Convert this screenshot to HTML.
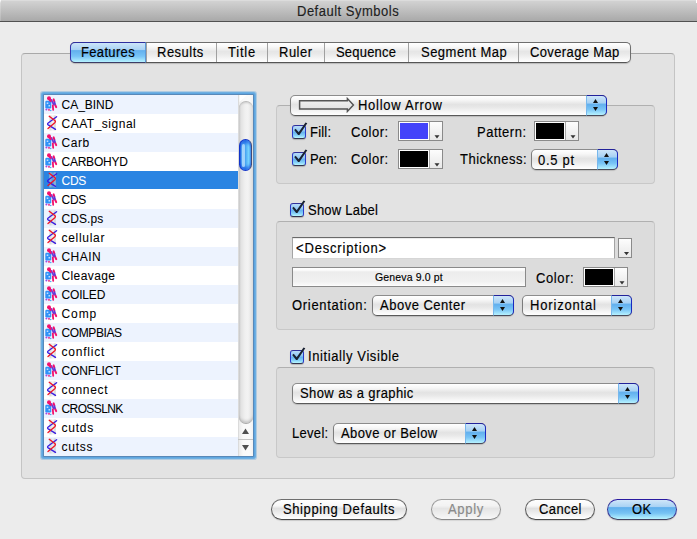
<!DOCTYPE html>
<html><head><meta charset="utf-8">
<style>
html,body{margin:0;padding:0;}
body{width:697px;height:539px;overflow:hidden;position:relative;background:#ececec;font-family:"Liberation Sans",sans-serif;}
div,span{box-sizing:border-box;}
.a{position:absolute;}
.t{position:absolute;white-space:nowrap;font-size:13px;line-height:13px;letter-spacing:.5px;color:#000;-webkit-text-stroke:.15px currentColor;transform:scaleY(1.08);transform-origin:0 0;}
.titlebar{left:0;top:0;width:697px;height:22px;background:linear-gradient(#e6e6e6 0px,#d2d2d2 1px,#a9a9a9 21px);border-bottom:1px solid #515151;}
.gbox{border:1px solid #c4c4c4;border-top-color:#a9a9a9;border-radius:4px;background:#e3e3e3;}
.ibox{border:1px solid #c8c8c8;border-top-color:#b0b0b0;border-radius:4px;background:#dcdcdc;}
/* segmented tabs */
.tabs{left:70px;top:42px;width:561px;height:21px;border:1px solid #6e6e6e;border-bottom-color:#555;border-radius:5px;background:linear-gradient(#fff 0%,#f8f8f8 20%,#e6e6e6 45%,#e9e9e9 58%,#f7f7f7 85%,#fff 100%);box-shadow:0 1px 1px rgba(0,0,0,.18);overflow:hidden;}
.seg{position:absolute;top:0;height:19px;border-left:1px solid #a0a0a0;}
.blue{background:linear-gradient(#cde5f9 0%,#a9d2f4 35%,#62b0ee 40%,#78c4f6 70%,#b6f2ff 100%);}
.pop{position:absolute;height:21px;border:1px solid #7c7c7c;border-top-color:#8c8c8c;border-bottom-color:#595959;border-radius:5px;background:linear-gradient(#fff 0%,#f7f7f7 20%,#e3e3e3 45%,#e7e7e7 58%,#f7f7f7 85%,#fff 100%);box-shadow:0 1px 1px rgba(0,0,0,.15);}
.pb{position:absolute;top:-1px;right:-1px;bottom:-1px;width:21px;border:1px solid #22229a;border-right-color:#1a2ac0;border-left:1px solid #78b8ec;border-bottom-color:#4a4a5a;border-radius:0 5px 5px 0;background:linear-gradient(#cde5f9 0%,#a9d2f4 35%,#62b0ee 45%,#78c4f6 70%,#b6f2ff 100%);}
.btn{position:absolute;height:21px;border:1px solid #5e5e5e;border-top-color:#6e6e6e;border-bottom-color:#464646;border-radius:11px;background:linear-gradient(#fff 0%,#f8f8f8 30%,#e0e0e0 45%,#ececec 65%,#fff 100%);box-shadow:0 1px 1px rgba(0,0,0,.15);}
.btn.def{border-color:#2a1aa0 #3a3a9a #404060;background:linear-gradient(#cfe6f9 0%,#a8d2f4 36%,#5eaeec 40%,#78c4f4 70%,#b8f4ff 100%);}
.cb{position:absolute;width:14px;height:14px;border:1px solid #2a3ac8;border-top-color:#30309a;border-bottom-color:#33334e;border-radius:3px;background:linear-gradient(#b8dcf8 0%,#92c8f4 40%,#66b2ee 52%,#86d0f8 78%,#b8f8ff 100%);box-shadow:0 1px 1px rgba(0,0,0,.2);}
.well{position:absolute;height:20px;border:1px solid #8a8a8a;background:linear-gradient(#fdfdfd,#e8e8e8);}
.tf{position:absolute;border:1px solid #a4a4a4;border-top-color:#6a6a6a;border-bottom-color:#d6d6d6;background:#fff;box-shadow:inset 0 1px 0 rgba(0,0,0,.08);}
.ic{position:absolute;left:0;top:0;}
.thumb{position:absolute;left:195px;top:44px;width:13px;height:32px;border-radius:6.5px;border:1px solid #1234c8;border-right-color:#404a7a;background:linear-gradient(90deg,#1a58dc 0%,#58aaf2 15%,#4aa6f2 50%,#78d6ff 80%,#4a9aec 100%);box-shadow:inset 0 4px 3px -1px rgba(10,60,220,.55),inset 0 -4px 3px -1px rgba(10,60,220,.55);}
.arr{position:absolute;left:-1px;top:-1px;}
.row{position:absolute;left:0;width:194px;height:19px;}
.row .t{font-size:12px;line-height:12px;left:17.5px;top:4px;-webkit-text-stroke:.05px currentColor;transform:none;}
</style></head><body>
<svg width="0" height="0" style="position:absolute;left:0;top:0">
<defs>
<g id="hel">
 <rect x="5" y="1.5" width="7" height="15" fill="#d0d0d0" opacity=".3"/><rect x="5.5" y="1.3" width="2" height="15" fill="#c8c8c8" opacity=".45"/><rect x="9.8" y="1.3" width="2" height="15" fill="#c8c8c8" opacity=".45"/>
 <path d="M12.6 2.7 L4.2 9 Q3 10 4.2 10.9 L11.5 15.3" stroke="#3a1ee0" stroke-width="1.35" fill="none" stroke-linecap="round"/>
 <path d="M5.2 2.3 L10.8 6.5 Q12 7.6 10.8 8.7 L4 14.6" stroke="#f01424" stroke-width="1.35" fill="none" stroke-linecap="round"/>
</g>
<g id="mol">
 <rect x="1.3" y="5.8" width="6" height="7.6" rx="1.2" fill="#3092f8"/>
 <rect x="2.7" y="7.5" width="1.6" height="1.4" fill="#cfe6ff"/>
 <rect x="4.5" y="10.1" width="1.6" height="1.4" fill="#cfe6ff"/>
 <path d="M7.4 5 L9.8 9.6" stroke="#6a3ad8" stroke-width="1.8" stroke-linecap="round"/>
 <circle cx="5" cy="3.3" r="2" fill="#f2126e"/><path d="M5.2 4 L6.6 5.8" stroke="#f2126e" stroke-width="2.2" stroke-linecap="round"/>
 <path d="M9.6 4.4 L10.3 6.4 M11.2 9.8 L12.2 12.2" stroke="#f2126e" stroke-width="2" stroke-linecap="round"/>
 <path d="M10.3 6.6 L11.2 9.8" stroke="#5a38d8" stroke-width="1.7"/>
 <path d="M8.8 10.4 L9.2 14.8" stroke="#f2126e" stroke-width="1.8" stroke-linecap="round"/>
 <circle cx="2.4" cy="14.5" r="1" fill="#a048e8"/>
 <circle cx="5" cy="14.8" r="1.1" fill="#f04a90"/>
 <circle cx="6.7" cy="15.5" r=".8" fill="#50a8f4"/>
</g>
</defs></svg>
<div class="a titlebar"></div>
<div class="a" style="left:0;top:0;width:1px;height:21px;background:linear-gradient(#fff,#d8d8d8 3px,#b8b8b8);"></div><div class="a" style="left:696px;top:0;width:1px;height:3px;background:#fff;"></div>
<div class="t" style="left:297px;top:4px;color:#1e1e1e">Default Symbols</div>

<!-- main group box -->
<div class="a gbox" style="left:21px;top:53px;width:654px;height:426px;"></div>

<!-- tabs -->
<div class="a tabs">
  
  <div class="seg" style="left:75px;width:70px;"></div>
  <div class="seg" style="left:145px;width:51px;"></div>
  <div class="seg" style="left:196px;width:57px;"></div>
  <div class="seg" style="left:253px;width:84px;"></div>
  <div class="seg" style="left:337px;width:110px;"></div>
  <div class="seg" style="left:447px;width:113px;"></div>
</div>
<div class="a blue" style="left:70px;top:42px;width:76px;height:21px;border:1px solid #2e2e9e;border-left-color:#3434b0;border-right:1px solid #5a98d8;border-bottom-color:#3d3d66;border-radius:5px 0 0 5px;"></div>
<div class="t" style="left:81px;top:45px;letter-spacing:.34px">Features</div>
<div class="t" style="left:157px;top:45px;letter-spacing:.5px">Results</div>
<div class="t" style="left:228px;top:45px;letter-spacing:.8px">Title</div>
<div class="t" style="left:279px;top:45px;letter-spacing:.5px">Ruler</div>
<div class="t" style="left:336px;top:45px;letter-spacing:.2px">Sequence</div>
<div class="t" style="left:421px;top:45px;letter-spacing:.48px">Segment Map</div>
<div class="t" style="left:530px;top:45px;letter-spacing:.37px">Coverage Map</div>

<!-- list box -->
<div id="list" class="a" style="left:41px;top:92px;width:215px;height:367px;">
  <div class="a" style="left:2px;top:2px;width:211px;height:363px;background:#5888b8;border-radius:1px;box-shadow:0 0 0 1px #5ea6e0,0 0 0 2px rgba(94,166,224,.78),0 0 0 3px rgba(94,166,224,.38);"></div>
  <div class="a" style="left:3px;top:3px;width:209px;height:361px;background:#fff;overflow:hidden;">
    <div id="rows" class="a" style="left:0;top:0;width:194px;height:361px;">
<div class="row" style="top:0px;background:#edf3fe"><svg class="ic" width="16" height="19" viewBox="0 0 16 19"><use href="#mol"/></svg><div class="t" style="color:#000;letter-spacing:-0.02px">CA_BIND</div></div>
<div class="row" style="top:19px;background:#fff"><svg class="ic" width="16" height="19" viewBox="0 0 16 19"><use href="#hel"/></svg><div class="t" style="color:#000;letter-spacing:0.51px">CAAT_signal</div></div>
<div class="row" style="top:38px;background:#edf3fe"><svg class="ic" width="16" height="19" viewBox="0 0 16 19"><use href="#mol"/></svg><div class="t" style="color:#000;letter-spacing:0.53px">Carb</div></div>
<div class="row" style="top:57px;background:#fff"><svg class="ic" width="16" height="19" viewBox="0 0 16 19"><use href="#mol"/></svg><div class="t" style="color:#000;letter-spacing:-0.24px">CARBOHYD</div></div>
<div class="row" style="top:76px;height:18px;background:#2a84e2"><svg class="ic" width="16" height="19" viewBox="0 0 16 19"><use href="#hel"/></svg><div class="t" style="color:#fff;letter-spacing:-0.25px">CDS</div></div>
<div class="row" style="top:95px;background:#fff"><svg class="ic" width="16" height="19" viewBox="0 0 16 19"><use href="#mol"/></svg><div class="t" style="color:#000;letter-spacing:-0.25px">CDS</div></div>
<div class="row" style="top:114px;background:#edf3fe"><svg class="ic" width="16" height="19" viewBox="0 0 16 19"><use href="#hel"/></svg><div class="t" style="color:#000;letter-spacing:0.08px">CDS.ps</div></div>
<div class="row" style="top:133px;background:#fff"><svg class="ic" width="16" height="19" viewBox="0 0 16 19"><use href="#hel"/></svg><div class="t" style="color:#000;letter-spacing:0.71px">cellular</div></div>
<div class="row" style="top:152px;background:#edf3fe"><svg class="ic" width="16" height="19" viewBox="0 0 16 19"><use href="#mol"/></svg><div class="t" style="color:#000;letter-spacing:0.45px">CHAIN</div></div>
<div class="row" style="top:171px;background:#fff"><svg class="ic" width="16" height="19" viewBox="0 0 16 19"><use href="#mol"/></svg><div class="t" style="color:#000;letter-spacing:0.39px">Cleavage</div></div>
<div class="row" style="top:190px;background:#edf3fe"><svg class="ic" width="16" height="19" viewBox="0 0 16 19"><use href="#mol"/></svg><div class="t" style="color:#000;letter-spacing:-0.16px">COILED</div></div>
<div class="row" style="top:209px;background:#fff"><svg class="ic" width="16" height="19" viewBox="0 0 16 19"><use href="#mol"/></svg><div class="t" style="color:#000;letter-spacing:0.9px">Comp</div></div>
<div class="row" style="top:228px;background:#edf3fe"><svg class="ic" width="16" height="19" viewBox="0 0 16 19"><use href="#mol"/></svg><div class="t" style="color:#000;letter-spacing:-0.39px">COMPBIAS</div></div>
<div class="row" style="top:247px;background:#fff"><svg class="ic" width="16" height="19" viewBox="0 0 16 19"><use href="#hel"/></svg><div class="t" style="color:#000;letter-spacing:0.77px">conflict</div></div>
<div class="row" style="top:266px;background:#edf3fe"><svg class="ic" width="16" height="19" viewBox="0 0 16 19"><use href="#mol"/></svg><div class="t" style="color:#000;letter-spacing:-0.11px">CONFLICT</div></div>
<div class="row" style="top:285px;background:#fff"><svg class="ic" width="16" height="19" viewBox="0 0 16 19"><use href="#hel"/></svg><div class="t" style="color:#000;letter-spacing:0.67px">connect</div></div>
<div class="row" style="top:304px;background:#edf3fe"><svg class="ic" width="16" height="19" viewBox="0 0 16 19"><use href="#mol"/></svg><div class="t" style="color:#000;letter-spacing:-0.6px">CROSSLNK</div></div>
<div class="row" style="top:323px;background:#fff"><svg class="ic" width="16" height="19" viewBox="0 0 16 19"><use href="#hel"/></svg><div class="t" style="color:#000;letter-spacing:0.75px">cutds</div></div>
<div class="row" style="top:342px;background:#edf3fe"><svg class="ic" width="16" height="19" viewBox="0 0 16 19"><use href="#hel"/></svg><div class="t" style="color:#000;letter-spacing:0.75px">cutss</div></div>
</div>
    <!-- scrollbar -->
    <div class="a" style="left:194px;top:0;width:15px;height:361px;background:linear-gradient(90deg,#d2d2d2 0px,#ededed 1.5px,#f9f9f9 5px,#fbfbfb 11px,#f2f2f2 15px);"></div>
    <svg class="a" style="left:194px;top:0" width="15" height="8"><polygon points="1.5,0 9,0 1.5,7" fill="#ffffff"/></svg>
    <div class="a" style="left:194.5px;top:6px;width:14px;height:323px;border-radius:7px;border-top:1px solid #b8b8b8;border-bottom:1px solid #a8a8a8;background:linear-gradient(90deg,#c8c8c8 0px,#e2e2e2 2px,#f0f0f0 6px,#f3f3f3 9px,#e6e6e6 12px,#dadada 14px);box-shadow:inset 0 3px 2px -2px rgba(0,0,0,.15),inset 0 -4px 3px -2px rgba(0,0,0,.18);"></div>
    <div class="thumb"><div class="a" style="left:1.5px;top:4px;width:3.5px;height:23px;border-radius:1.5px;background:rgba(196,230,255,.7);"></div></div>
    <div class="a" style="left:194px;top:344px;width:15px;height:1px;background:#c4c4c4;"></div>
    <svg class="a" style="left:194px;top:328px" width="15" height="33"><polygon points="4,11 11,11 7.5,5.4" fill="#505050"/><polygon points="4,22 11,22 7.5,27.5" fill="#505050"/></svg>
  </div>
</div>

<!-- right side -->
<div class="a ibox" style="left:276px;top:105px;width:379px;height:79px;"></div>
<div class="pop" style="left:290px;top:95px;width:317px;"><div class="pb"><svg class="arr" width="21" height="21"><polygon points="7,8 12,8 9.5,4" fill="#111"/><polygon points="7,12 12,12 9.5,16" fill="#111"/></svg></div></div>
<svg class="a" style="left:0;top:0" width="697" height="130"><defs><linearGradient id="ag" x1="0" y1="0" x2="0" y2="1"><stop offset="0" stop-color="#f4f4f4"/><stop offset="1" stop-color="#dedede"/></linearGradient></defs><path d="M299.6 100.7 H347.4 V98.6 L353.4 105 L347.4 111.4 V109 H299.6 Z" fill="url(#ag)" stroke="#555" stroke-width="1.5"/></svg>
<div class="t" style="left:358px;top:98px;letter-spacing:.73px">Hollow Arrow</div>

<div class="cb" style="left:292px;top:125px;"><svg class="a" style="left:-1px;top:-4px;overflow:visible" width="18" height="18"><polygon points="2.2,7.9 3.7,6.7 6.7,10.2 13.5,0.5 15.3,1.3 7.4,13.1 6.1,13.1" fill="#1a2232"/></svg></div>
<div class="t" style="left:310px;top:125px;letter-spacing:.2px">Fill:</div>
<div class="t" style="left:351px;top:125px;">Color:</div>
<div class="well" style="left:398px;top:121px;width:45px;"><div class="a" style="left:0;top:0;width:30px;height:18px;background:#fff;"></div><div class="a" style="left:1px;top:1px;width:28px;height:16px;background:#4343fa;"></div><div class="a" style="left:30px;top:0;width:1px;height:18px;background:#a8a8a8;"></div><svg class="a" style="left:31px;top:0" width="12" height="18"><polygon points="4.5,13.2 9.5,13.2 7,16.4" fill="#333"/></svg></div>
<div class="t" style="left:477px;top:125px;">Pattern:</div>
<div class="well" style="left:534px;top:121px;width:45px;"><div class="a" style="left:0;top:0;width:30px;height:18px;background:#fff;"></div><div class="a" style="left:1px;top:1px;width:28px;height:16px;background:#000;"></div><div class="a" style="left:30px;top:0;width:1px;height:18px;background:#a8a8a8;"></div><svg class="a" style="left:31px;top:0" width="12" height="18"><polygon points="4.5,13.2 9.5,13.2 7,16.4" fill="#333"/></svg></div>
<div class="cb" style="left:292px;top:152px;"><svg class="a" style="left:-1px;top:-4px;overflow:visible" width="18" height="18"><polygon points="2.2,7.9 3.7,6.7 6.7,10.2 13.5,0.5 15.3,1.3 7.4,13.1 6.1,13.1" fill="#1a2232"/></svg></div>
<div class="t" style="left:310px;top:152px;letter-spacing:.13px">Pen:</div>
<div class="t" style="left:351px;top:152px;">Color:</div>
<div class="well" style="left:398px;top:149px;width:45px;"><div class="a" style="left:0;top:0;width:30px;height:18px;background:#fff;"></div><div class="a" style="left:1px;top:1px;width:28px;height:16px;background:#000;"></div><div class="a" style="left:30px;top:0;width:1px;height:18px;background:#a8a8a8;"></div><svg class="a" style="left:31px;top:0" width="12" height="18"><polygon points="4.5,13.2 9.5,13.2 7,16.4" fill="#333"/></svg></div>
<div class="t" style="left:460px;top:152px;">Thickness:</div>
<div class="pop" style="left:531px;top:149px;width:87px;"><div class="pb"><svg class="arr" width="21" height="21"><polygon points="7,8 12,8 9.5,4" fill="#111"/><polygon points="7,12 12,12 9.5,16" fill="#111"/></svg></div></div>
<div class="t" style="left:538px;top:153px;letter-spacing:.7px">0.5 pt</div>

<div class="cb" style="left:290px;top:203px;"><svg class="a" style="left:-1px;top:-4px;overflow:visible" width="18" height="18"><polygon points="2.2,7.9 3.7,6.7 6.7,10.2 13.5,0.5 15.3,1.3 7.4,13.1 6.1,13.1" fill="#1a2232"/></svg></div>
<div class="t" style="left:308px;top:203px;letter-spacing:.22px">Show Label</div>
<div class="a ibox" style="left:276px;top:221px;width:379px;height:109px;"></div>
<div class="tf" style="left:292px;top:237px;width:323px;height:22px;"></div>
<div class="t" style="left:296px;top:241px;letter-spacing:.83px">&lt;Description&gt;</div>
<div class="well" style="left:618px;top:238px;width:14px;height:20px;"><svg class="a" style="left:0;top:0" width="12" height="18"><polygon points="5,13 10,13 7.5,16.2" fill="#333"/></svg></div>
<div class="well" style="left:292px;top:267px;width:234px;height:20px;background:linear-gradient(#fff 0%,#fcfcfc 12%,#ececec 22%,#f1f1f1 75%,#f8f8f8 92%,#fff 100%);"></div>
<div class="t" style="left:375px;top:272px;font-size:10.5px;line-height:10.5px;letter-spacing:.15px;transform:none">Geneva 9.0 pt</div>
<div class="t" style="left:536px;top:271px;letter-spacing:.6px">Color:</div>
<div class="well" style="left:583px;top:267px;width:45px;"><div class="a" style="left:0;top:0;width:30px;height:18px;background:#fff;"></div><div class="a" style="left:1px;top:1px;width:28px;height:16px;background:#000;"></div><div class="a" style="left:30px;top:0;width:1px;height:18px;background:#a8a8a8;"></div><svg class="a" style="left:31px;top:0" width="12" height="18"><polygon points="4.5,13.2 9.5,13.2 7,16.4" fill="#333"/></svg></div>
<div class="t" style="left:292px;top:298px;letter-spacing:.7px">Orientation:</div>
<div class="pop" style="left:372px;top:295px;width:142px;"><div class="pb"><svg class="arr" width="21" height="21"><polygon points="7,8 12,8 9.5,4" fill="#111"/><polygon points="7,12 12,12 9.5,16" fill="#111"/></svg></div></div>
<div class="t" style="left:380px;top:298px;">Above Center</div>
<div class="pop" style="left:522px;top:295px;width:110px;"><div class="pb"><svg class="arr" width="21" height="21"><polygon points="7,8 12,8 9.5,4" fill="#111"/><polygon points="7,12 12,12 9.5,16" fill="#111"/></svg></div></div>
<div class="t" style="left:530px;top:298px;letter-spacing:.83px">Horizontal</div>

<div class="cb" style="left:290px;top:350px;"><svg class="a" style="left:-1px;top:-4px;overflow:visible" width="18" height="18"><polygon points="2.2,7.9 3.7,6.7 6.7,10.2 13.5,0.5 15.3,1.3 7.4,13.1 6.1,13.1" fill="#1a2232"/></svg></div>
<div class="t" style="left:308px;top:349px;letter-spacing:.6px">Initially Visible</div>
<div class="a ibox" style="left:276px;top:367px;width:379px;height:91px;"></div>
<div class="pop" style="left:292px;top:383px;width:347px;"><div class="pb"><svg class="arr" width="21" height="21"><polygon points="7,8 12,8 9.5,4" fill="#111"/><polygon points="7,12 12,12 9.5,16" fill="#111"/></svg></div></div>
<div class="t" style="left:300px;top:386px;letter-spacing:.4px">Show as a graphic</div>
<div class="t" style="left:292px;top:426px;letter-spacing:.3px">Level:</div>
<div class="pop" style="left:333px;top:423px;width:153px;"><div class="pb"><svg class="arr" width="21" height="21"><polygon points="7,8 12,8 9.5,4" fill="#111"/><polygon points="7,12 12,12 9.5,16" fill="#111"/></svg></div></div>
<div class="t" style="left:341px;top:426px;letter-spacing:.4px">Above or Below</div>

<!-- buttons -->
<div class="btn" style="left:271px;top:499px;width:136px;"></div>
<div class="t" style="left:283px;top:502px;letter-spacing:.6px">Shipping Defaults</div>
<div class="btn" style="left:431px;top:499px;width:70px;opacity:.6"></div>
<div class="t" style="left:448px;top:502px;color:#8a8a8a;letter-spacing:.7px">Apply</div>
<div class="btn" style="left:525px;top:499px;width:70px;"></div>
<div class="t" style="left:539px;top:502px;letter-spacing:.4px">Cancel</div>
<div class="btn def" style="left:607px;top:499px;width:70px;"></div>
<div class="t" style="left:632px;top:502px;">OK</div>
</body></html>
